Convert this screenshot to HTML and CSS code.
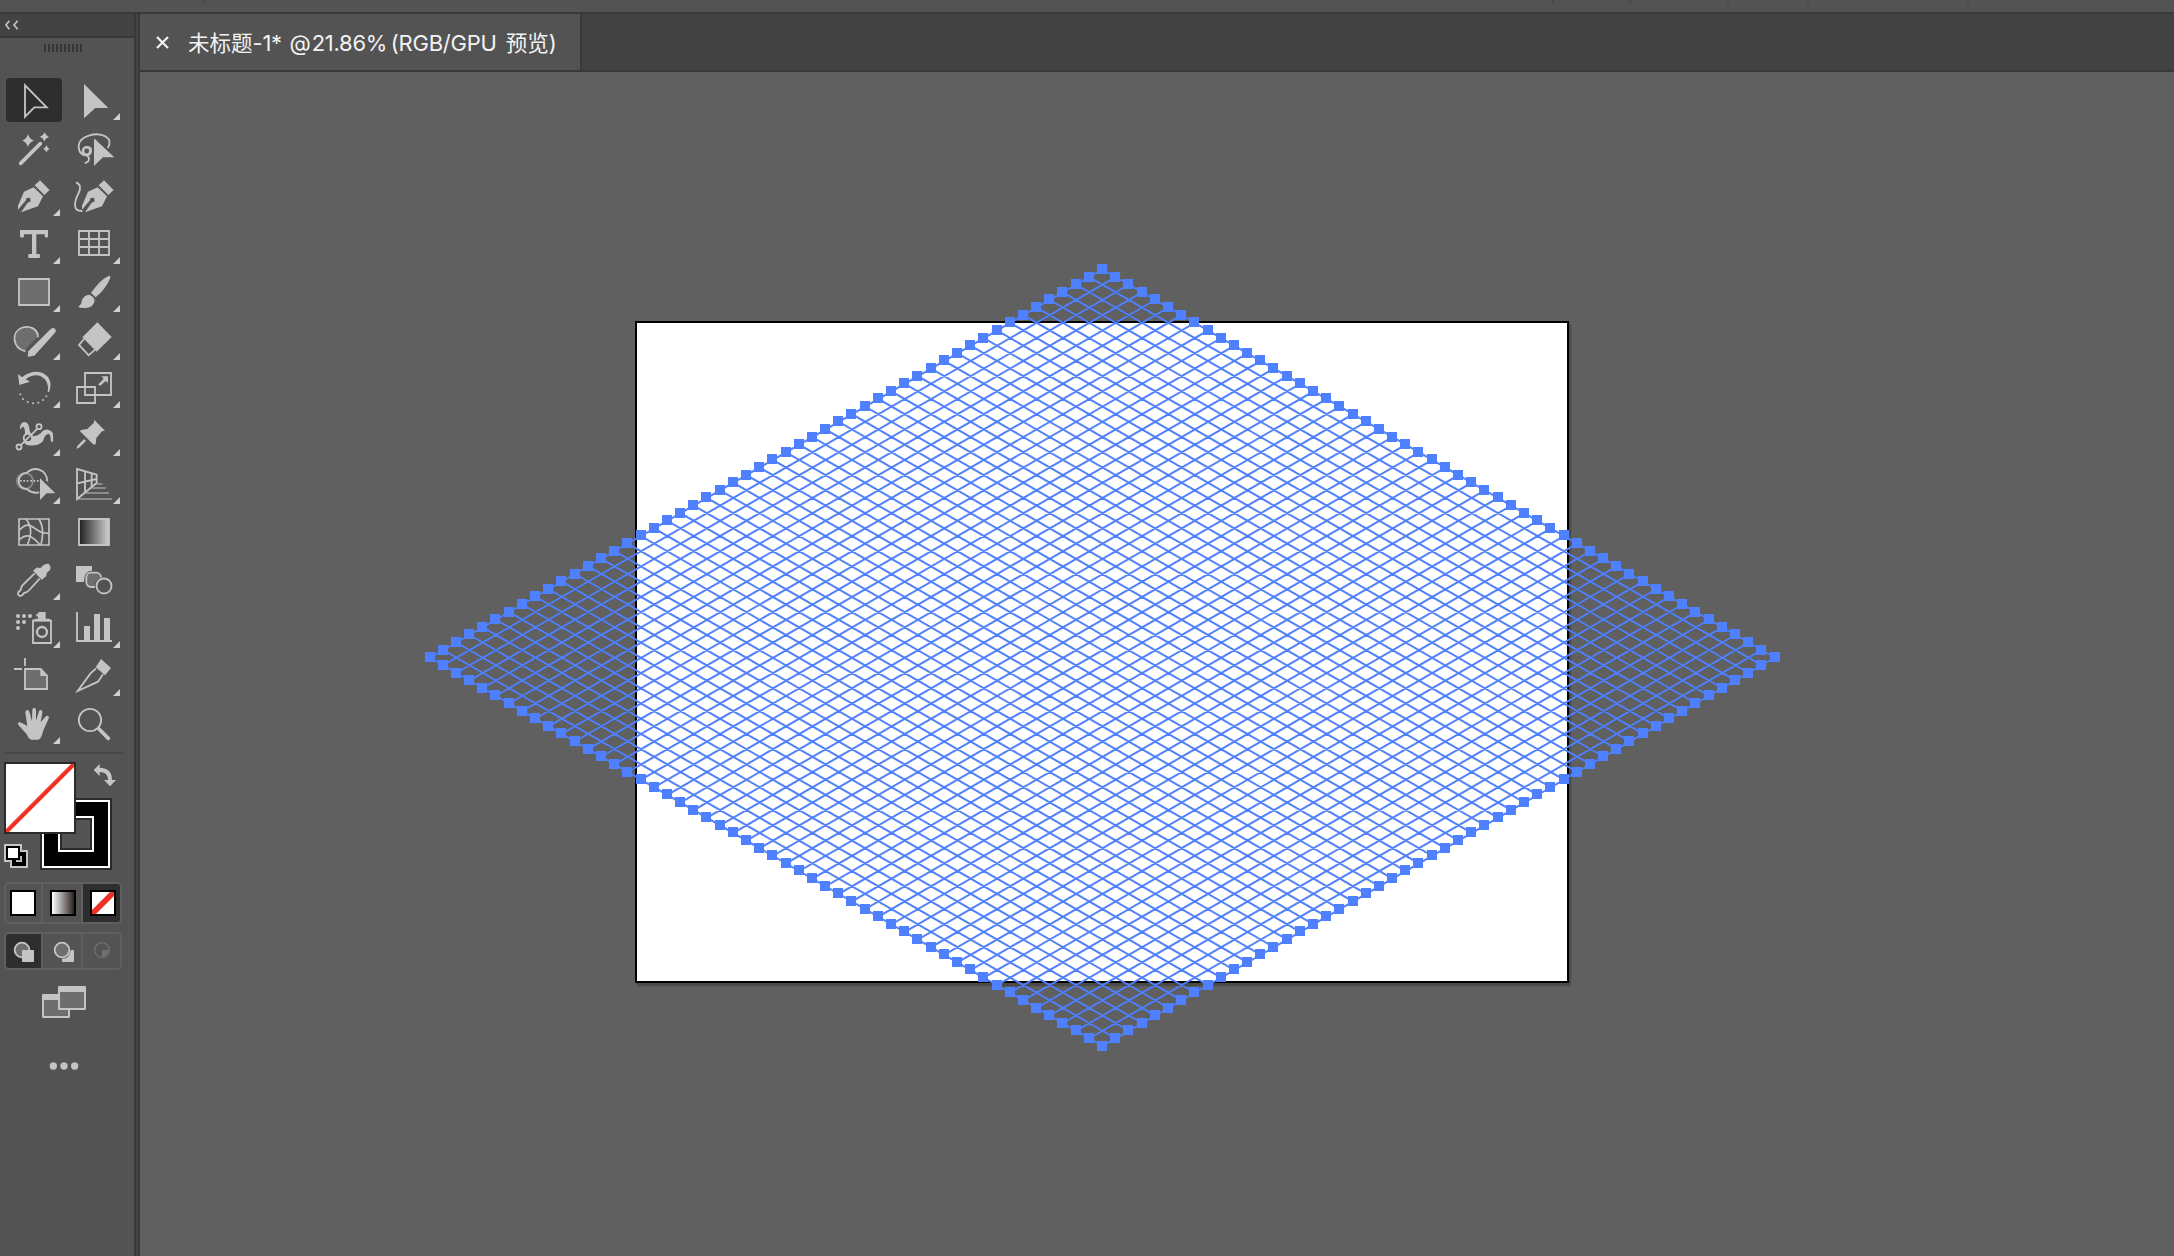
FILE: index.html
```html
<!DOCTYPE html>
<html lang="zh-CN">
<head>
<meta charset="utf-8">
<title>未标题-1*</title>
<link rel="stylesheet" href="styles.css">
</head>
<body>
<div class="app">
<div class="appbar"><svg width="2174" height="4"><path d="M203 0h2v4h-2zM1552 0h2v4h-2zM1629 0h2v4h-2zM1727 0h2v4h-2zM1807 0h2v4h-2zM1967 0h2v4h-2z" fill="#4b4b4b"/></svg></div>
<div class="workspace">
<aside class="panel">
  <div class="panel-head"><svg width="134" height="22" viewBox="0 42 402 66"><path d="M28 62L18 75L28 88M53 62L42 75L53 88" fill="none" stroke="#c4c4c4" stroke-width="5"/></svg></div>
  <div class="grip"></div>
  <div class="tools">
    <div class="tool active"><svg viewBox="12 228 180 144"><path class="ln" d="M75 256V350L103 322H140Z"/></svg></div>
    <div class="tool more"><svg viewBox="192 228 180 144"><path d="M252 252V355L286 324H325Z"/></svg></div>

    <div class="tool"><svg viewBox="12 372 180 144"><path class="wand" d="M62 490L121 431"/><path d="M84 402Q88 417 102 422Q89 425 84 440Q79 427 67 421Q81 417 84 402ZM134 397Q137 407 147 411Q137 414 133 424Q129 414 120 410Q130 407 134 397ZM140 436Q142 444 149 447Q142 449 139 457Q137 449 130 446Q137 443 140 436Z"/></svg></div>
    <div class="tool"><svg viewBox="192 372 180 144"><path class="ln" d="M323 444C332 430 330 418 318 410C290 394 236 408 236 438C236 458 247 467 260 466C276 464 278 444 264 441C247 438 242 460 256 466C270 468 272 486 254 489"/><circle class="ln" cx="260" cy="453" r="10"/><path d="M282 415V498L309 472H343Z"/></svg></div>

    <div class="tool more"><svg viewBox="12 516 180 144"><path d="M120 541L149 570L133 585L104 556ZM101 562L129 589L114 619L63 637L84 607A7 7 0 1 0 78 601L54 629V617L72 575Z"/></svg></div>
    <div class="tool"><svg viewBox="192 516 180 144"><path d="M312 541L341 570L325 585L296 556ZM293 562L321 589L306 619L255 637L276 607A7 7 0 1 0 270 601L246 629V617L264 575Z"/><path class="ln" d="M228 547C242 552 243 565 236 579C220 610 220 635 247 633"/></svg></div>

    <div class="tool more"><svg viewBox="12 30 180 144"><path d="M60 60H144V79Q144 83 139 83Q134 83 134 78V73H109V132H116Q121 132 121 138Q121 144 116 144H89Q84 144 84 138Q84 132 89 132H96V73H72V78Q72 83 66 83Q60 83 60 79Z"/></svg></div>
    <div class="tool more"><svg viewBox="192 30 180 144"><path class="ln" d="M237 63H327V135H237ZM237 87H327M237 111H327M267 63V135M297 63V135"/></svg></div>

    <div class="tool more"><svg viewBox="12 174 180 144"><path class="ln shade" d="M57 207H147V285H57Z"/></svg></div>
    <div class="tool more"><svg viewBox="192 174 180 144"><path d="M329 197Q333 198 330 206Q316 238 287 262L273 249Q298 212 321 200ZM269 254Q281 260 284 269Q282 292 258 294Q241 295 234 290Q246 283 245 273Q250 255 269 254Z"/></svg></div>

    <div class="tool more"><svg viewBox="12 318 180 144"><path class="shadefill" d="M78 424Q44 418 44 386Q48 354 80 352Q112 354 114 380L79 414Z"/><path class="ln" d="M76 424C36 414 34 366 64 354C90 344 114 358 114 382"/><path d="M152 357Q159 351 165 356Q170 362 165 368L103 437L83 440L85 424Z"/></svg></div>
    <div class="tool more"><svg viewBox="192 318 180 144"><path d="M292 337L335 381L290 425L247 382Z"/><path class="ln" d="M252 387L237 405L266 436L285 419"/></svg></div>

    <div class="tool more"><svg viewBox="12 462 180 144"><path d="M54 492L66 502Q95 479 126 488Q162 504 147 546L143 546Q150 512 120 497Q97 491 77 508L90 515L58 525Z"/><g><circle cx="61" cy="553" r="3"/><circle cx="69" cy="567" r="3"/><circle cx="83" cy="576" r="3"/><circle cx="99" cy="580" r="3"/><circle cx="115" cy="578" r="3"/><circle cx="129" cy="570" r="3"/><circle cx="139" cy="559" r="3"/></g></svg></div>
    <div class="tool more"><svg viewBox="192 462 180 144"><path class="ln" d="M255 489H333V555H255ZM231 531H285V579H231Z"/><path d="M304 499H324V519L317 513L300 528L295 523L311 506Z"/></svg></div>

    <div class="tool more"><svg viewBox="12 6 180 144"><path d="M60 57Q59 37 74 36Q86 37 88 55Q90 73 100 79Q118 77 127 64Q143 51 157 67Q161 76 159 96Q155 98 152 91Q153 73 145 71Q133 75 129 94Q114 109 86 106Q71 104 72 89Q78 67 72 52Q67 46 62 58Z"/><circle cx="84" cy="84" r="10" fill="#535353"/><path class="ln" d="M61 107L113 55"/><circle class="ln" cx="84" cy="84" r="13"/><circle class="ln bg" cx="57" cy="111" r="7.500"/><circle class="ln bg" cx="117" cy="50" r="7.500"/></svg></div>
    <div class="tool more"><svg viewBox="192 6 180 144"><path d="M283 30L315 62L306 64L289 84L287 103L281 104L240 64L243 60L262 57L281 39ZM252 87L258 93L237 113L229 116L232 108Z"/></svg></div>

    <div class="tool more"><svg viewBox="12 150 180 144"><circle class="ln dim" cx="75" cy="213" r="24"/><path class="ln" d="M80 189A24 24 0 1 0 80 237Q98 252 118 247M80 189C104 167 140 177 142 214"/><path d="M60 210h5v5h-5zM70 210h5v5h-5zM80 210h5v5h-5zM91 210h5v5h-5zM101 210h5v5h-5zM111 210h5v5h-5zM120 205V270L140 250H166Z"/></svg></div>
    <div class="tool more"><svg viewBox="192 150 180 144"><path class="ln dim" d="M290 222H308M276 234H318M256 249H327M234 267H336"/><path class="ln" d="M231 177L290 194V219L231 267ZM231 220L290 207M255 184V247M275 190V232"/></svg></div>

    <div class="tool"><svg viewBox="12 294 180 144"><path class="ln thin" d="M57 327H147V405H57ZM57 362C76 340 88 342 103 354C122 367 126 370 147 370M57 390C78 370 92 377 105 389L121 405M78 327C98 352 94 375 82 405M117 327C133 354 128 382 123 405"/></svg></div>
    <div class="tool"><svg viewBox="192 294 180 144"><defs><linearGradient id="ramp"><stop stop-color="#202020"/><stop offset="1" stop-color="#cfcfcf"/></linearGradient></defs><path class="ln ramp-fill" d="M237 327H327V405H237Z"/></svg></div>

    <div class="tool more"><svg viewBox="12 438 180 144"><path d="M124 472Q132 460 145 461Q155 468 150 480L140 489Q141 500 132 503L126 510L99 482L106 476Q112 470 120 475Z"/><path class="ln" d="M104 490L68 525Q63 532 62 540Q50 548 56 556Q64 562 72 549Q82 547 88 540L119 506"/></svg></div>
    <div class="tool"><svg viewBox="192 438 180 144"><path d="M228 468H276V482Q252 482 252 516H228Z"/><rect class="ln shade" x="259" y="488" width="44" height="43" rx="14"/><circle cx="312" cy="528" r="28" fill="#535353"/><circle class="ln" cx="312" cy="528" r="22.500"/></svg></div>

    <div class="tool more"><svg viewBox="12 42 180 144"><circle cx="54" cy="78" r="6"/><circle cx="72" cy="78" r="6"/><circle cx="90" cy="78" r="6"/><circle cx="54" cy="96" r="6"/><circle cx="72" cy="96" r="6"/><circle cx="54" cy="114" r="6"/><path d="M115 66H137V86H148L156 94H96L106 86H114V80Q108 80 108 74Q110 70 115 72Z"/><path class="ln" d="M99 92H153V159H99Z"/><circle cx="126" cy="126" r="15" fill="none" stroke="#c4c4c4" stroke-width="7"/></svg></div>
    <div class="tool more"><svg viewBox="192 42 180 144"><path class="ln" d="M231 66V153H336"/><path d="M252 108H270V152H252ZM282 72H300V152H282ZM312 84H330V152H312Z"/></svg></div>

    <div class="tool"><svg viewBox="12 186 180 144"><path class="ln shade" d="M75 237H122L141 257V297H75Z"/><path d="M121 236L143 258H121Z"/><path class="ln" d="M75 204V228M42 237H66"/></svg></div>
    <div class="tool more"><svg viewBox="192 186 180 144"><path d="M303 207L333 234L315 256L287 232Z"/><path class="ln" d="M288 235L271 251L233 303L294 275L309 253"/></svg></div>

    <div class="tool more"><svg viewBox="12 330 180 144"><path d="M54 401Q55 394 64 398L82 408L76 368Q76 360 82 360Q87 361 89 368L96 394L97 359Q98 353 103 353Q108 354 108 360V392L117 364Q119 358 125 361Q128 364 127 369L122 397L136 380Q141 375 146 379Q148 382 145 388L129 424Q125 444 116 449H93Q85 445 79 431L57 407Q54 404 54 401Z"/></svg></div>
    <div class="tool"><svg viewBox="192 330 180 144"><circle class="ln" cx="270" cy="390" r="33.500"/><path class="wand" d="M297 417L325 445"/></svg></div>
  </div>
  <div class="divider"></div>
  <svg class="swatches" width="134" height="129" viewBox="0 39 402 387">
    <rect x="120" y="174" width="216" height="216" fill="#2b2b2b"/>
    <rect x="126" y="180" width="204" height="204" fill="#fff"/>
    <rect x="132" y="186" width="192" height="192" fill="#000"/>
    <rect x="174" y="228" width="108" height="108" fill="#fff"/>
    <rect x="180" y="234" width="96" height="96" fill="#2b2b2b"/>
    <rect x="186" y="240" width="84" height="84" fill="#535353"/>
    <rect x="12" y="66" width="216" height="216" fill="#2b2b2b"/>
    <rect x="18" y="72" width="204" height="204" fill="#fff"/>
    <path d="M18 267V276H27L222 81V72H213Z" fill="#ee3124"/>
    <path d="M281 90L299 72V83Q336 84 336 120H348L330 139L312 120H324Q324 96 299 96V108Z" fill="#c4c4c4"/>
    <path d="M12 312H66V330H84V384H30V366H12Z" fill="#c4c4c4"/>
    <rect x="36" y="336" width="42" height="42" fill="#000"/><rect x="48" y="348" width="18" height="18" fill="#c4c4c4"/><rect x="53" y="353" width="8" height="8" fill="#444"/>
    <rect x="18" y="318" width="42" height="42" fill="#000"/><rect x="24" y="324" width="30" height="30" fill="#fff"/>
  </svg>
  <div class="group paint">
    <div class="cell"><span class="chip"></span></div>
    <div class="cell"><span class="chip ramp"></span></div>
    <div class="cell on"><svg class="chip-none" viewBox="0 0 26 26"><path d="M0 0H26V26H0Z" fill="#000"/><path d="M2 2H24V24H2Z" fill="#fff"/><path d="M2 20V24H6L24 6V2H20Z" fill="#ee3124"/></svg></div>
  </div>
  <div class="group draw">
    <div class="cell on"><svg viewBox="18 12 108 102"><circle class="ln shade" cx="66" cy="60" r="22"/><rect x="66" y="60" width="36" height="36" rx="2"/></svg></div>
    <div class="cell"><svg viewBox="135 12 108 102"><rect x="186" y="60" width="36" height="36" rx="2"/><circle cx="186" cy="60" r="26" fill="#535353"/><circle class="ln shade" cx="186" cy="60" r="22"/></svg></div>
    <div class="cell"><svg viewBox="252 12 108 102"><circle cx="306" cy="60" r="22" fill="none" stroke="#707070" stroke-width="4"/><path d="M306 60H327Q326 80 306 81Z" fill="#707070"/></svg></div>
  </div>
  <svg class="screens" width="134" height="110" viewBox="0 120 402 330"><rect x="126" y="192" width="84" height="72" rx="3" fill="#c4c4c4"/><rect x="132" y="210" width="72" height="48" fill="#6e6e6e"/><rect x="174" y="168" width="84" height="72" rx="3" fill="#c4c4c4"/><rect x="180" y="186" width="72" height="48" fill="#6e6e6e"/><circle cx="160" cy="408" r="11" fill="#c4c4c4"/><circle cx="192" cy="408" r="11" fill="#c4c4c4"/><circle cx="224" cy="408" r="11" fill="#c4c4c4"/></svg>
</aside>
<div class="gutter"></div>
<main class="document">
  <div class="tabs">
    <div class="tab"><svg class="close" width="13" height="13" viewBox="0 0 13 13"><path d="M1 1L12 12M12 1L1 12" stroke="#f2f2f2" stroke-width="2.200"/></svg><div class="title"><span>未标题</span><span class="latin number">-1* </span><span class="latin at">@ </span><span class="latin scale">21.86% </span><span class="latin mode">(RGB/GPU </span><span>预览</span><span class="latin">)</span></div></div>
  </div>
  <div class="canvas">
    <div class="artboard"></div>
    <svg class="mesh" width="2034" height="1184" viewBox="140 72 2034 1184"><path id="under"/><path id="lines"/><path id="anchors"/></svg>
  </div>
</main>
</div>
</div>
<script src="mesh.js"></script>
</body>
</html>
```
FILE: styles.css
```css
* { box-sizing: border-box; }
body { margin: 0; background: #535353; font-family: "Inter", "Noto Sans CJK SC", sans-serif; }
.app { height: 1256px; display: flex; flex-direction: column; overflow: hidden; }
.appbar { height: 14px; background: #535353; border-bottom: 2px solid #393939; flex: none; }
.workspace { flex: 1; display: flex; min-height: 0; }
svg { display: block; }
.panel { width: 134px; flex: none; background: #535353; display: flex; flex-direction: column; }
.panel-head { height: 24px; background: #434343; border-bottom: 2px solid #393939; flex: none; }
.grip { width: 38px; height: 8px; margin: 6px 0 0 44px; flex: none; background: repeating-linear-gradient(90deg, #373737 0 2px, #535353 2px 4px); }
.tools { display: grid; grid-template-columns: 60px 60px; grid-auto-rows: 48px; margin: 24px 0 0 4px; flex: none; }
.tool { position: relative; }
.tool.active::before { content: ""; position: absolute; left: 2px; top: 2px; width: 56px; height: 44px; border-radius: 4px; background: #2e2e2e; }
.tool svg { position: relative; width: 60px; height: 48px; fill: #c4c4c4; }
.tool.more::after { content: ""; position: absolute; left: 49px; top: 37px; width: 7px; height: 7px; background: #d0d0d0; clip-path: polygon(100% 0, 100% 100%, 0 100%); }
.ln { fill: none; stroke: #c4c4c4; stroke-width: 5.5; }
.thin { stroke-width: 5; }
.dim { stroke: #8b8b8b; }
.shade { fill: #6e6e6e; }
.shadefill { fill: #6e6e6e; }
.ramp-fill { fill: url(#ramp); }
.bg { fill: #535353; }
.wand { fill: none; stroke: #c4c4c4; stroke-width: 11; stroke-linecap: round; }
.divider { width: 120px; height: 2px; margin: 4px 0 0 4px; background: #484848; flex: none; }
.swatches { margin-top: -1px; flex: none; }
.group { width: 118px; margin-left: 4px; border: 2px solid #5f5f5f; border-radius: 5px; display: flex; flex: none; overflow: hidden; }
.paint { height: 42px; }
.draw { height: 38px; margin-top: 8px; }
.cell { display: flex; align-items: center; border-right: 2px solid #5f5f5f; }
.cell:nth-child(1) { width: 37px; flex: none; }
.cell:nth-child(2) { width: 40px; flex: none; }
.cell:nth-child(3) { flex: 1; border-right: 0; }
.paint .cell { padding-left: 7px; }
.paint .cell:first-child { padding-left: 4px; }
.draw .cell:nth-child(2) { padding-left: 2px; }
.draw .cell:nth-child(3) { padding-left: 1px; }
.cell.on { background: #2e2e2e; }
.cell svg { width: 36px; height: 34px; fill: #c4c4c4; flex: none; }
.cell .chip-none { width: 26px; height: 26px; }
.chip { width: 26px; height: 26px; border: 2px solid #000; background: #fff; flex: none; }
.chip.ramp { background: linear-gradient(90deg, #fff, #2b2220); }
.screens { flex: none; }
.gutter { width: 6px; flex: none; background: #444; border: solid #393939; border-width: 0 2px; }
.document { flex: 1; display: flex; flex-direction: column; min-width: 0; }
.tabs { height: 58px; flex: none; background: #424242; border-bottom: 2px solid #393939; display: flex; }
.tab { width: 442px; background: #535353; border-right: 2px solid #393939; display: flex; align-items: center; padding-left: 16px; color: #f2f2f2; }
.title { display: flex; margin: 2px 0 0 19px; font-size: 21.5px; line-height: 30px; white-space: pre; }
.latin { font-size: 22px; letter-spacing: -0.25px; word-spacing: -0.8px; }
.number { margin-right: 2.5px; }
.at { margin-right: -4px; }
.scale { margin-right: -1.5px; }
.mode { margin-right: 4px; }
.canvas { flex: 1; background: #606060; position: relative; overflow: hidden; }
.artboard { position: absolute; left: 495px; top: 249px; width: 934px; height: 662px; background: #fff; border: 2px solid #000; box-shadow: 2px 3px 1px #4b4b4b; }
.mesh { position: absolute; left: 0; top: 0; }
#under { stroke: #000; stroke-width: 0.5; opacity: 0.3; fill: none; }
#lines { stroke: #4f80ff; stroke-width: 1.9; fill: none; }
#anchors { fill: #4f80ff; shape-rendering: crispEdges; }
```
FILE: mesh.js
```js
// Isometric mesh: a square grid of n cells projected onto a rhombus.
const n = 51, cx = 1102.52, top0 = 269.5, mid = 657.8, left = 430.02;
const dx = (cx - left) / n, dy = (mid - top0) / n;
const at = (i, j) => [cx + (i - j) * dx, top0 + (i + j) * dy];
const pt = p => p.map(v => v.toFixed(2)).join(' ');
let lines = '', anchors = '';
const anchor = p => {
  anchors += `M${Math.floor(p[0]) - 5} ${Math.floor(p[1]) - 5}h10v10h-10z`;
};
for (let k = 0; k <= n; k++) {
  lines += `M${pt(at(k, 0))}L${pt(at(k, n))}M${pt(at(0, k))}L${pt(at(n, k))}`;
  [at(k, 0), at(k, n), at(0, k), at(n, k)].forEach(anchor);
}
document.getElementById('under').setAttribute('d', lines);
document.getElementById('under').setAttribute('transform', 'translate(0 1)');
document.getElementById('lines').setAttribute('d', lines);
document.getElementById('anchors').setAttribute('d', anchors);
```
